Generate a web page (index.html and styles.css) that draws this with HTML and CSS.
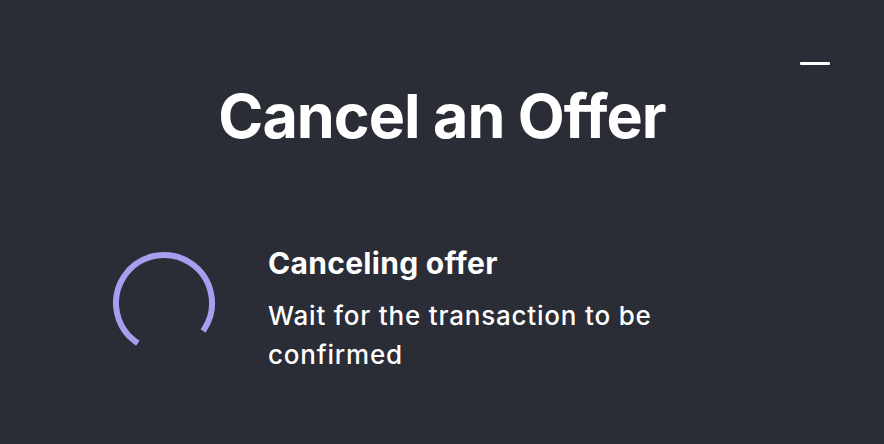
FILE: index.html
```html
<!DOCTYPE html>
<html>
<head>
    <meta charset="utf-8">
    <title>Cancel an Offer</title>
    <link rel="stylesheet" href="styles.css">
</head>
<body>
<div class="modal">
    <div class="modal-top">
        <button class="btn-minimize" aria-label="Minimize"><span></span></button>
    </div>
    <h1 class="modal-title">Cancel an Offer</h1>
    <div class="step">
        <svg class="spinner" width="108" height="108" viewBox="0 0 108 108">
            <circle cx="54" cy="54" r="48" fill="none" stroke="#a99df0" stroke-width="6"
                    stroke-dasharray="228 302" transform="rotate(123 54 54)"/>
        </svg>
        <div class="step-text">
            <h2 class="step-title">Canceling offer</h2>
            <p class="step-desc">Wait for the transaction to be confirmed</p>
        </div>
    </div>
</div>
</body>
</html>
```

FILE: styles.css
```css
body {
    margin: 0;
    background: #2a2c36;
    width: 100%;
    height: 100%;
    font-family: Inter, "Noto Sans", sans-serif;
    color: #fff;
}

.modal {
    height: 444px;
    padding: 0 54px 0 110px;
    box-sizing: border-box;
}

.modal-top {
    display: flex;
    justify-content: flex-end;
    padding-top: 52px;
}

.btn-minimize {
    width: 30px;
    height: 22px;
    padding: 0;
    border: 0;
    background: none;
    display: flex;
    align-items: center;
}

.btn-minimize span {
    display: block;
    width: 30px;
    height: 3px;
    background: #fff;
    border-radius: 1px;
}

.modal-title {
    margin: 5px -54px 0 -110px;
    text-align: center;
    font-size: 61px;
    font-weight: 700;
    line-height: 74px;
    letter-spacing: -1px;
}

.step {
    display: flex;
    align-items: center;
    gap: 50px;
    margin-top: 91px;
}

.spinner {
    flex: none;
    margin-bottom: 12px;
}

.step-title {
    margin: 0 0 14px;
    font-size: 30px;
    font-weight: 700;
    line-height: 38px;
    letter-spacing: 0.3px;
}

.step-desc {
    margin: 0;
    max-width: 400px;
    font-size: 26px;
    font-weight: 500;
    line-height: 39px;
    letter-spacing: 0.8px;
}
```
